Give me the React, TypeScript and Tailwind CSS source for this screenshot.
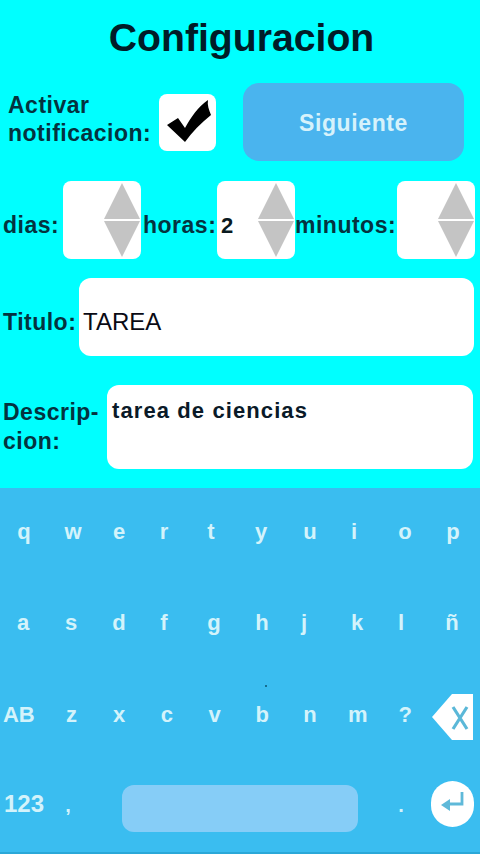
const ROW_ONE = ['q', 'w', 'e', 'r', 't', 'y', 'u', 'i', 'o', 'p']
const ROW_TWO = ['a', 's', 'd', 'f', 'g', 'h', 'j', 'k', 'l']
const ROW_THREE = ['z', 'x', 'c', 'v', 'b', 'n', 'm', '?']

const LABEL = 'font-["Liberation_Sans",sans-serif] font-bold text-[23px] tracking-[0.5px] text-[#04333f]'
const KEY_BASE = 'flex items-center justify-center font-["Liberation_Sans",sans-serif] font-bold text-[#d3f3fb]'
const KEY = `${KEY_BASE} text-[22px] pb-[5px]`

function Spinner({ value }: { value?: string }) {
  return (
    <div className="w-[78px] h-[78px] shrink-0 bg-white rounded-lg flex items-center justify-between pl-1 pr-[1px]">
      <span className="pt-[10px] font-['Liberation_Sans',sans-serif] font-bold text-[22px] text-[#0a1a20]">{value}</span>
      <svg width="36" height="76" viewBox="0 0 36 76" className="shrink-0">
        <path d="M18 1 L36 37 H0 Z" fill="#c4c4c4" />
        <path d="M0 39 H36 L18 75 Z" fill="#c4c4c4" />
      </svg>
    </div>
  )
}

function Backspace() {
  return (
    <svg width="42" height="48" viewBox="0 0 42 48">
      <path d="M0 24 L20 1 H41 V47 H20 Z" fill="#ffffff" />
      <path d="M21 14 L35 36 M35 14 L21 36" stroke="#5bb8d8" strokeWidth="3.2" fill="none" />
    </svg>
  )
}

function EnterKey() {
  return (
    <div className="w-[43px] h-[46px] rounded-full bg-white flex items-center justify-center">
      <svg width="26" height="26" viewBox="0 0 26 26">
        <path d="M22 1 V13 H6" stroke="#5fb9d9" strokeWidth="2.8" fill="none" />
        <path d="M1 14 L10 8 V20 Z" fill="#5fb9d9" />
      </svg>
    </div>
  )
}

export default function App() {
  return (
    <div className="w-[480px] h-[854px] bg-[#00ffff] flex flex-col overflow-hidden">
      <div className="h-[488px] shrink-0 flex flex-col">
        <h1 className="h-[83px] pt-[14px] pl-[3px] text-center font-['Liberation_Sans',sans-serif] font-bold text-[39.2px] leading-[48px] text-[#001c28]">
          Configuracion
        </h1>

        {/* Notification toggle + next */}
        <div className="flex items-center h-[78px]">
          <div className={`${LABEL} leading-[28px] w-[159px] pl-[8px] pb-[7px]`}>
            Activar
            <br />
            notificacion:
          </div>
          <div className="w-[57px] h-[57px] bg-white rounded-lg flex items-center justify-center">
            <svg width="46" height="46" viewBox="0 0 46 46" className="ml-[2px]">
              <path d="M1 26 L12 19 L19 29 C25 18 32 8 42 1 C41 6 43 11 45 16 C35 24 26 33 19 43 Z" fill="#000000" />
            </svg>
          </div>
          <button
            type="button"
            className="ml-[27px] w-[221px] h-[78px] pt-[2px] bg-[#4ab4ee] rounded-2xl font-['Liberation_Sans',sans-serif] font-bold text-[23px] tracking-[0.6px] text-[#d6f2fb]"
          >
            Siguiente
          </button>
        </div>

        {/* Timer */}
        <div className="flex items-center h-[78px] mt-[20px] pl-[3px]">
          <span className={`${LABEL} w-[60px] pt-[10px]`}>dias:</span>
          <Spinner />
          <span className={`${LABEL} w-[76px] pl-[2px] pt-[10px]`}>horas:</span>
          <Spinner value="2" />
          <span className={`${LABEL} w-[102px] pt-[10px]`}>minutos:</span>
          <Spinner />
        </div>

        <div className="flex items-center h-[78px] mt-[19px] pl-[3px]">
          <span className={`${LABEL} w-[76px] pt-[10px]`}>Titulo:</span>
          <div className="w-[395px] h-full bg-white rounded-xl flex items-center pl-1 pt-[10px] font-['Liberation_Sans',sans-serif] text-[24px] text-[#0a0a14]">
            TAREA
          </div>
        </div>

        <div className="flex items-center h-[84px] mt-[29px] pl-[3px]">
          <div className={`${LABEL} leading-[29px] w-[104px]`}>
            Descrip-
            <br />
            cion:
          </div>
          <div className="w-[366px] h-full bg-white rounded-xl pl-[5px] pt-[12px] font-['Liberation_Sans',sans-serif] font-bold text-[22px] leading-[28px] tracking-[1.1px] text-[#0a1a28]">
            tarea de ciencias
          </div>
        </div>
      </div>

      {/* Keyboard */}
      <div className="relative flex-1 bg-[#3abdf0] shadow-[inset_0_-2px_0_#2ba8d8] grid grid-rows-4">
        <div className="grid grid-cols-[48px_50px_42px_48px_46px_54px_44px_44px_58px_38px]">
          {ROW_ONE.map((k) => (
            <span key={k} className={KEY}>{k}</span>
          ))}
        </div>
        <div className="grid grid-cols-[46px_50px_46px_44px_56px_40px_44px_62px_26px_1fr]">
          {ROW_TWO.map((k) => (
            <span key={k} className={KEY}>{k}</span>
          ))}
          <span className={`${KEY} pl-[10px]`}>ñ</span>
        </div>
        <div className="grid grid-cols-[repeat(9,47.7px)_1fr]">
          <span className={`${KEY} pr-[10px]`}>AB</span>
          {ROW_THREE.map((k) => (
            <span key={k} className={KEY}>{k}</span>
          ))}
          <span className="flex items-center justify-end pr-[6px]">
            <Backspace />
          </span>
        </div>
        <div className="flex items-center">
          <span className={`${KEY_BASE} text-[24px] w-[48px] pb-[8px]`}>123</span>
          <span className={`${KEY_BASE} text-[20px] w-[48px] pr-[8px] pb-[6px]`}>,</span>
          <div className="ml-[26px] w-[236px] h-[47px] bg-[#86cdf7] rounded-xl" />
          <span className={`${KEY_BASE} text-[20px] w-[48px] ml-[19px] pb-[6px]`}>.</span>
          <div className="ml-[6px] mb-[9px]">
            <EnterKey />
          </div>
        </div>
        <span className="absolute left-[265px] top-[197px] w-[2px] h-[2px] rounded-full bg-[#0b5570]" />
      </div>
    </div>
  )
}
